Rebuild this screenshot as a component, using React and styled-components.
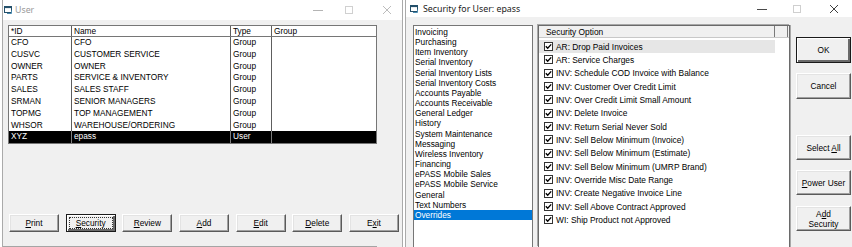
import styled, { createGlobalStyle, css } from "styled-components";

const GlobalStyle = createGlobalStyle`
  html, body {
    margin: 0;
    padding: 0;
    background: #fff;
  }
  body {
    font-family: "Liberation Sans", Arial, sans-serif;
  }
`;

const users = [
  ["CFO", "CFO", "Group"],
  ["CUSVC", "CUSTOMER SERVICE", "Group"],
  ["OWNER", "OWNER", "Group"],
  ["PARTS", "SERVICE & INVENTORY", "Group"],
  ["SALES", "SALES STAFF", "Group"],
  ["SRMAN", "SENIOR MANAGERS", "Group"],
  ["TOPMG", "TOP MANAGEMENT", "Group"],
  ["WHSOR", "WAREHOUSE/ORDERING", "Group"],
  ["XYZ", "epass", "User"],
];

const categories = [
  "Invoicing",
  "Purchasing",
  "Item Inventory",
  "Serial Inventory",
  "Serial Inventory Lists",
  "Serial Inventory Costs",
  "Accounts Payable",
  "Accounts Receivable",
  "General Ledger",
  "History",
  "System Maintenance",
  "Messaging",
  "Wireless Inventory",
  "Financing",
  "ePASS Mobile Sales",
  "ePASS Mobile Service",
  "General",
  "Text Numbers",
  "Overrides",
];

const options = [
  "AR: Drop Paid Invoices",
  "AR: Service Charges",
  "INV: Schedule COD Invoice with Balance",
  "INV: Customer Over Credit Limit",
  "INV: Over Credit Limit Small Amount",
  "INV: Delete Invoice",
  "INV: Return Serial Never Sold",
  "INV: Sell Below Minimum (Invoice)",
  "INV: Sell Below Minimum (Estimate)",
  "INV: Sell Below Minimum (UMRP Brand)",
  "INV: Override Misc Date Range",
  "INV: Create Negative Invoice Line",
  "INV: Sell Above Contract Approved",
  "WI: Ship Product not Approved",
];

const WindowIcon = () => (
  <svg width="8" height="8" viewBox="0 0 8 8">
    <rect x="0.5" y="0.5" width="7" height="6" fill="#fff" stroke="#24506b" />
    <rect x="0.5" y="0.5" width="7" height="1.6" fill="#24506b" />
    <path d="M3 7.5 H7.5 V4.5" fill="none" stroke="#4a8bb0" />
  </svg>
);

const Minimize = ({ color }) => (
  <svg width="10" height="10" viewBox="0 0 10 10">
    <line x1="0" y1="5.5" x2="10" y2="5.5" stroke={color} />
  </svg>
);

const Maximize = ({ color }) => (
  <svg width="8" height="8" viewBox="0 0 8 8">
    <rect x="0.5" y="0.5" width="7" height="7" fill="none" stroke={color} />
  </svg>
);

const Close = ({ color }) => (
  <svg width="8" height="8" viewBox="0 0 8 8">
    <path d="M0 0 L8 8 M8 0 L0 8" stroke={color} strokeWidth="0.9" />
  </svg>
);

const Check = () => (
  <svg width="7" height="7" viewBox="0 0 7 7">
    <path d="M0.8 3.2 L2.7 5.2 L6.2 1.4" fill="none" stroke="#000" strokeWidth="1.4" />
  </svg>
);

const Desktop = styled.div`
  display: flex;
  width: 852px;
  height: 247px;
  overflow: hidden;
  background: #fff;
`;

const UserWindow = styled.section`
  box-sizing: border-box;
  display: flex;
  flex-direction: column;
  width: 401px;
  height: 247px;
  margin-left: 2px;
  border-left: 1px solid #aaaaaa;
  border-right: 1px solid #aaaaaa;
`;

const SecurityWindow = styled.section`
  display: flex;
  flex-direction: column;
  flex: 1;
  height: 247px;
  margin-left: 2px;
  border-left: 1px solid #aaaaaa;
  min-width: 0;
`;

const TitleBar = styled.header`
  display: flex;
  align-items: center;
  flex-shrink: 0;
  height: ${(p) => p.$h}px;
  padding: 0 ${(p) => p.$right}px 0 ${(p) => p.$left}px;
  background: #fff;
`;

const Title = styled.span`
  margin-left: ${(p) => p.$gap}px;
  font-family: "Noto Sans", "Open Sans", sans-serif;
  font-size: 8.8px;
  color: ${(p) => (p.$active ? "#1a1a1a" : "#9a9a9a")};
`;

const CaptionGlyph = styled.span`
  display: flex;
  margin-left: ${(p) => p.$ml || 0}px;
`;

const Spacer = styled.span`
  flex: 1;
`;

const UserBody = styled.div`
  display: flex;
  flex-direction: column;
  flex: 1;
  padding: 5px 0 0 5px;
  background: #f0f0f0;
`;

const ListView = styled.div`
  box-sizing: border-box;
  width: 369px;
  border: 1px solid #767676;
  background: #fff;
  font-size: 8.3px;
`;

const GridRow = styled.div`
  box-sizing: border-box;
  display: grid;
  grid-template-columns: 63px 159px 41px 1fr;
  height: ${(p) => p.$h}px;
  line-height: ${(p) => p.$h}px;
  background: ${(p) => (p.$selected ? "#000" : "#fff")};
  color: ${(p) => (p.$selected ? "#fff" : "#000")};
  ${(p) =>
    p.$header &&
    css`
      line-height: 11px;
      border-bottom: 1px solid #767676;
    `}
`;

const GridCell = styled.div`
  padding-left: 2px;
  white-space: nowrap;
  overflow: hidden;
  border-right: 1px solid ${(p) => (p.$selected ? "#7d7d7d" : "#5e5e5e")};
  &:last-child {
    border-right: none;
  }
`;

const ButtonRow = styled.div`
  display: flex;
  gap: 6.67px;
  margin-top: auto;
  margin-left: 1px;
`;

const StatusLine = styled.div`
  width: 374px;
  height: 0;
  margin: 14px 0 0 -5px;
  border-top: 1px solid #a5a5a5;
`;

const PushButton = styled.button`
  box-sizing: border-box;
  display: flex;
  align-items: center;
  justify-content: center;
  width: ${(p) => p.$w}px;
  height: ${(p) => p.$h}px;
  margin-top: ${(p) => p.$mt || 0}px;
  padding: 0;
  background: #f0f0f0;
  border: 1px solid;
  border-color: #ffffff #5a5a5a #5a5a5a #ffffff;
  box-shadow: inset -1px -1px 0 #a0a0a0, inset 1px 1px 0 #e3e3e3;
  font-family: "Liberation Sans", Arial, sans-serif;
  font-size: 8.3px;
  line-height: 10px;
  color: #000;
  text-align: center;
  ${(p) =>
    p.$default &&
    css`
      border-color: #1a1a1a;
      box-shadow: inset 1px 1px 0 #ffffff, inset -2px -2px 0 #6a6a6a;
    `}
  ${(p) =>
    p.$focused &&
    css`
      outline: 1px dotted #333;
      outline-offset: -4px;
    `}
`;

const SecurityBody = styled.div`
  display: flex;
  flex: 1;
  padding: 8px 0 0 7px;
  background: #f0f0f0;
  overflow: hidden;
`;

const CategoryList = styled.div`
  box-sizing: border-box;
  width: 120px;
  padding-top: 1px;
  border: 1px solid #767676;
  border-bottom: none;
  background: #fff;
  font-size: 8.3px;
`;

const CategoryItem = styled.div`
  height: 10.17px;
  line-height: 10.17px;
  padding-left: 1px;
  white-space: nowrap;
  background: ${(p) => (p.$selected ? "#0078d7" : "transparent")};
  color: ${(p) => (p.$selected ? "#fff" : "#000")};
`;

const OptionList = styled.div`
  box-sizing: border-box;
  width: 252px;
  margin-left: 5px;
  border: 1px solid #6a6a6a;
  border-bottom: none;
  box-shadow: -1px -1px 0 #a8a8a8, 1px 0 0 #a8a8a8;
  background: #fff;
  font-size: 8.4px;
`;

const OptionHeader = styled.div`
  box-sizing: border-box;
  display: flex;
  height: 12px;
  line-height: 12px;
  background: #f0f0f0;
  border-bottom: 1px solid #c8c8c8;
`;

const HeaderCell = styled.div`
  box-sizing: border-box;
  width: ${(p) => p.$w}px;
  padding-left: ${(p) => p.$pl || 0}px;
  border-right: 1px solid #7a7a7a;
`;

const OptionRows = styled.div`
  padding-top: 2px;
`;

const OptionRow = styled.div`
  display: flex;
  align-items: center;
  width: 236px;
  height: 13.33px;
  white-space: nowrap;
  background: ${(p) => (p.$hot ? "#e6e6e6" : "transparent")};
`;

const CheckBox = styled.span`
  box-sizing: border-box;
  display: flex;
  align-items: center;
  justify-content: center;
  width: 9px;
  height: 9px;
  margin: 0 3px 0 5px;
  border: 1px solid #333;
  background: #fff;
`;

const ButtonColumn = styled.div`
  display: flex;
  flex-direction: column;
  margin-left: 6px;
  padding-top: 12px;
`;

const Underline = styled.u`
  text-underline-offset: 1px;
`;

const App = () => {
  return (
    <>
      <GlobalStyle />
      <Desktop>
        <UserWindow>
          <TitleBar $h={20} $left={1} $right={11}>
            <WindowIcon />
            <Title $gap={3}>User</Title>
            <Spacer />
            <CaptionGlyph>
              <Minimize color="#b4b4b4" />
            </CaptionGlyph>
            <CaptionGlyph $ml={22}>
              <Maximize color="#d0d0d0" />
            </CaptionGlyph>
            <CaptionGlyph $ml={30}>
              <Close color="#b4b4b4" />
            </CaptionGlyph>
          </TitleBar>
          <UserBody>
            <ListView>
              <GridRow $header $h={11}>
                <GridCell>*ID</GridCell>
                <GridCell>Name</GridCell>
                <GridCell>Type</GridCell>
                <GridCell>Group</GridCell>
              </GridRow>
              {users.map(([id, name, type]) => {
                const selected = id === "XYZ";
                return (
                  <GridRow key={id} $h={11.8} $selected={selected}>
                    <GridCell $selected={selected}>{id}</GridCell>
                    <GridCell $selected={selected}>{name}</GridCell>
                    <GridCell $selected={selected}>{type}</GridCell>
                    <GridCell $selected={selected} />
                  </GridRow>
                );
              })}
            </ListView>
            <ButtonRow>
              <PushButton $w={50} $h={18}>
                <span><Underline>P</Underline>rint</span>
              </PushButton>
              <PushButton $w={50} $h={18} $default $focused>
                <span><Underline>S</Underline>ecurity</span>
              </PushButton>
              <PushButton $w={50} $h={18}>
                <span><Underline>R</Underline>eview</span>
              </PushButton>
              <PushButton $w={50} $h={18}>
                <span><Underline>A</Underline>dd</span>
              </PushButton>
              <PushButton $w={50} $h={18}>
                <span><Underline>E</Underline>dit</span>
              </PushButton>
              <PushButton $w={50} $h={18}>
                <span><Underline>D</Underline>elete</span>
              </PushButton>
              <PushButton $w={50} $h={18}>
                <span>E<Underline>x</Underline>it</span>
              </PushButton>
            </ButtonRow>
            <StatusLine />
          </UserBody>
        </UserWindow>

        <SecurityWindow>
          <TitleBar $h={17} $left={4} $right={14}>
            <WindowIcon />
            <Title $gap={5} $active>
              Security for User: epass
            </Title>
            <Spacer />
            <CaptionGlyph>
              <Minimize color="#4a4a4a" />
            </CaptionGlyph>
            <CaptionGlyph $ml={26}>
              <Maximize color="#cfcfcf" />
            </CaptionGlyph>
            <CaptionGlyph $ml={29}>
              <Close color="#2a2a2a" />
            </CaptionGlyph>
          </TitleBar>
          <SecurityBody>
            <CategoryList>
              {categories.map((c) => (
                <CategoryItem key={c} $selected={c === "Overrides"}>
                  {c}
                </CategoryItem>
              ))}
            </CategoryList>
            <OptionList>
              <OptionHeader>
                <HeaderCell $w={236} $pl={7}>
                  Security Option
                </HeaderCell>
                <HeaderCell $w={13} />
              </OptionHeader>
              <OptionRows>
                {options.map((o, i) => (
                  <OptionRow key={o} $hot={i === 0}>
                    <CheckBox>
                      <Check />
                    </CheckBox>
                    {o}
                  </OptionRow>
                ))}
              </OptionRows>
            </OptionList>
            <ButtonColumn>
              <PushButton $w={55} $h={26} $default>
                OK
              </PushButton>
              <PushButton $w={55} $h={26} $mt={10}>
                Cancel
              </PushButton>
              <PushButton $w={55} $h={25} $mt={36}>
                <span>Select <Underline>A</Underline>ll</span>
              </PushButton>
              <PushButton $w={55} $h={25} $mt={10}>
                <span><Underline>P</Underline>ower User</span>
              </PushButton>
              <PushButton $w={55} $h={25} $mt={11}>
                <span>
                  A<Underline>d</Underline>d
                  <br />
                  Security
                </span>
              </PushButton>
            </ButtonColumn>
          </SecurityBody>
        </SecurityWindow>
      </Desktop>
    </>
  );
};

export default App;
